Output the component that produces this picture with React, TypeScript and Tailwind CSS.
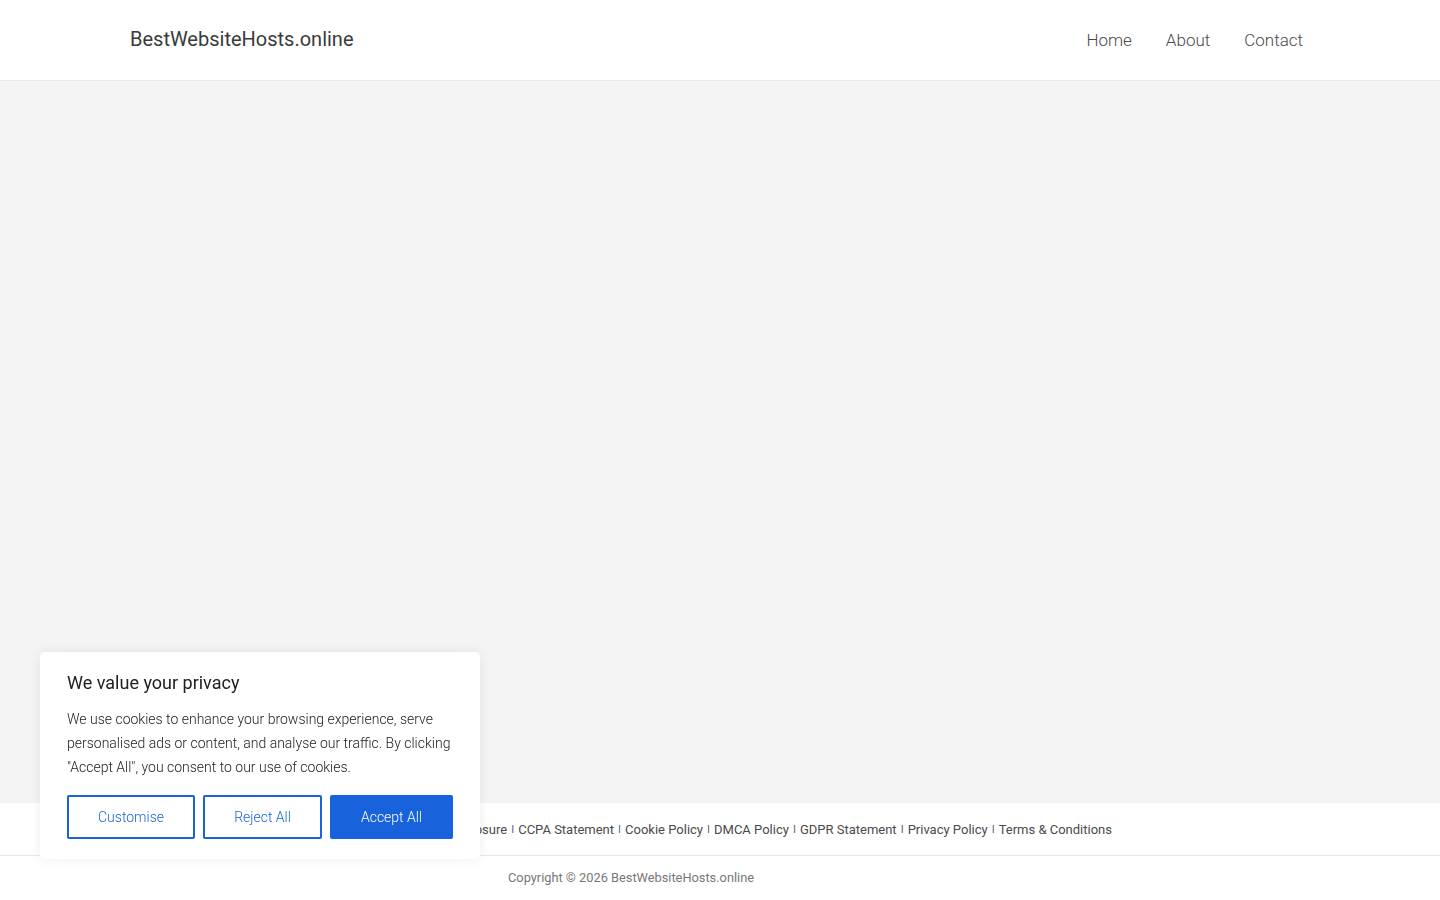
import React from 'react';

const footerLinks = [
  'Affiliate Disclosure',
  'CCPA Statement',
  'Cookie Policy',
  'DMCA Policy',
  'GDPR Statement',
  'Privacy Policy',
  'Terms & Conditions',
];

function Header() {
  return (
    <header className="h-[81px] bg-white border-b border-[#e8e8e8]">
      <div className="h-full flex items-center justify-between pl-[130px] pr-[120px]">
        <a href="#" className="text-[20px] leading-none text-[#3a3a3a] pb-[2px]">
          BestWebsiteHosts.online
        </a>
        <nav className="flex items-center pt-[2px]">
          {['Home', 'About', 'Contact'].map((item) => (
            <a
              key={item}
              href="#"
              className="px-[17px] text-[17px] font-light text-[#4a4a4a]"
            >
              {item}
            </a>
          ))}
        </nav>
      </div>
    </header>
  );
}

function Footer() {
  return (
    <footer className="bg-white">
      <div className="h-[52px] flex items-center justify-end pr-[328px] pt-[2px] text-[13px] text-[#4a4a4a]">
        {footerLinks.map((link, i) => (
          <React.Fragment key={link}>
            {i > 0 && <span className="px-[4px] text-[11px] text-[#666]">I</span>}
            <a href="#">{link}</a>
          </React.Fragment>
        ))}
      </div>
      <div className="h-[45px] border-t border-[#e6e6e6] flex items-center pl-[508px] text-[12.8px] text-[#777]">
        Copyright © 2026 BestWebsiteHosts.online
      </div>
    </footer>
  );
}

function CookieBanner() {
  return (
    <div className="fixed left-[40px] bottom-[41px] w-[440px] bg-white rounded-[5px] shadow-[0_0_12px_rgba(0,0,0,0.08)] px-[27px] pt-[19px] pb-[20px] text-[#212121]">
      <h2 className="text-[18px] leading-[24px] font-normal mb-[12px]">We value your privacy</h2>
      <p className="text-[14px] leading-[24px] font-light">
        We use cookies to enhance your browsing experience, serve personalised ads or content,
        and analyse our traffic. By clicking "Accept All", you consent to our use of cookies.
      </p>
      <div className="mt-[16px] flex gap-[8px]">
        <button className="w-[128px] h-[44px] rounded-[2px] border-2 border-[#1863dc] text-[#1863dc] text-[14px] font-light">
          Customise
        </button>
        <button className="w-[119px] h-[44px] rounded-[2px] border-2 border-[#1863dc] text-[#1863dc] text-[14px] font-light">
          Reject All
        </button>
        <button className="flex-1 h-[44px] rounded-[2px] border-2 border-[#1863dc] bg-[#1863dc] text-white text-[14px] font-light">
          Accept All
        </button>
      </div>
    </div>
  );
}

export default function App() {
  return (
    <div className="min-h-screen flex flex-col font-['Roboto',sans-serif]">
      <Header />
      <main className="flex-1 bg-[#f4f4f4]" />
      <Footer />
      <CookieBanner />
    </div>
  );
}
